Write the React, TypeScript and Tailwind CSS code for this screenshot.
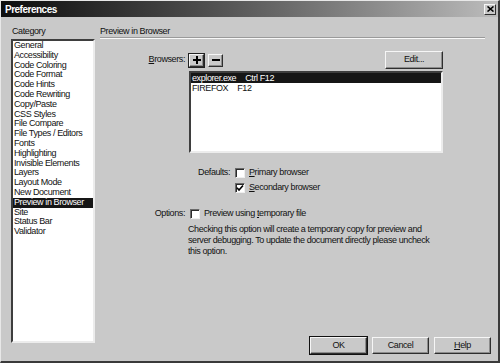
import clsx from "clsx";

const categories = [
  "General",
  "Accessibility",
  "Code Coloring",
  "Code Format",
  "Code Hints",
  "Code Rewriting",
  "Copy/Paste",
  "CSS Styles",
  "File Compare",
  "File Types / Editors",
  "Fonts",
  "Highlighting",
  "Invisible Elements",
  "Layers",
  "Layout Mode",
  "New Document",
  "Preview in Browser",
  "Site",
  "Status Bar",
  "Validator",
];

const browsers = [
  { name: "explorer.exe", key: "Ctrl F12", selected: true },
  { name: "FIREFOX", key: "F12", selected: false },
];

// raised win-classic button
function Btn({ children, className, isDefault }: { children: React.ReactNode; className?: string; isDefault?: boolean }) {
  return (
    <button
      className={clsx(
        "flex items-center justify-center bg-[#c9c9c9] border border-t-[#f6f6f6] border-l-[#f6f6f6] border-r-[#2e2e2e] border-b-[#2e2e2e] shadow-[inset_-1px_-1px_0_#8c8c8c]",
        isDefault && "outline outline-1 outline-[#111]",
        className
      )}
    >
      {children}
    </button>
  );
}

function Checkbox({ checked, className }: { checked?: boolean; className?: string }) {
  return (
    <div
      className={clsx(
        "flex items-center justify-center bg-white border border-t-[#6a6a6a] border-l-[#6a6a6a] border-r-[#efefef] border-b-[#efefef] shadow-[inset_1px_1px_0_#2a2a2a]",
        className
      )}
    >
      {checked && (
        <svg width="8" height="8" viewBox="0 0 8 8">
          <path d="M1 3.8 L3 6 L7 1.5" fill="none" stroke="#000" strokeWidth="1.6" />
        </svg>
      )}
    </div>
  );
}

// underlined access key letter
function Key({ children }: { children: React.ReactNode }) {
  return <span className="underline underline-offset-[1px]">{children}</span>;
}

export default function App() {
  return (
    <div className="w-[500px] h-[363px] flex flex-col bg-[#c9c9c9] border-t border-l border-t-[#e8e8e8] border-l-[#e8e8e8] border-r-2 border-b-2 border-r-[#3a3a3a] border-b-[#3a3a3a] text-[9px] tracking-[-0.4px] text-[#111] font-['Liberation_Sans',Arial,sans-serif] overflow-hidden">
      {/* Title bar */}
      <div className="h-[16px] flex items-center justify-between pl-[4px] pr-[2px] bg-linear-to-r from-[#0e0e0e] to-[#bcbcbc]">
        <span className="text-white font-bold text-[10px] tracking-[-0.5px]">Preferences</span>
        <div className="w-[12px] h-[11px] flex items-center justify-center bg-[#c9c9c9] border border-t-[#f6f6f6] border-l-[#f6f6f6] border-r-[#2e2e2e] border-b-[#2e2e2e]">
          <svg width="7" height="6" viewBox="0 0 7 6">
            <path d="M0.5 0.5 L6.5 5.5 M6.5 0.5 L0.5 5.5" stroke="#000" strokeWidth="1.6" />
          </svg>
        </div>
      </div>

      {/* Body */}
      <div className="flex-1 flex pl-[10px] pr-[7px] pb-[7px] gap-[5px]">
        {/* Category column */}
        <div className="w-[84px] flex flex-col">
          <div className="mt-[8px] h-[12px] leading-[12px] pl-[1px]">Category</div>
          <div className="mt-[2px] h-[304px] bg-white border-2 border-t-[#3e3e3e] border-l-[#3e3e3e] border-r-[#ececec] border-b-[#ececec]">
            {categories.map((c) => (
              <div
                key={c}
                className={clsx(
                  "h-[9.8px] leading-[9.8px] pl-[1px] whitespace-nowrap",
                  c === "Preview in Browser" && "bg-[#161616] text-white"
                )}
              >
                {c}
              </div>
            ))}
          </div>
        </div>

        {/* Settings panel */}
        <div className="flex-1 flex flex-col">
          <div className="mt-[8px] h-[12px] leading-[12px]">Preview in Browser</div>
          <div className="w-[385px] h-[2px] border-t border-b border-t-[#9a9a9a] border-b-[#f8f8f8]" />

          {/* Browsers row */}
          <div className="mt-[12px] w-[343px] h-[18px] flex items-center">
            <div className="w-[85px] text-right">
              <Key>B</Key>rowsers:
            </div>
            <Btn className="ml-[4px] w-[15px] h-[13px] outline outline-1 outline-[#222]">
              <svg width="8" height="8" viewBox="0 0 8 8">
                <path d="M3 0 H5 V3 H8 V5 H5 V8 H3 V5 H0 V3 H3 Z" fill="#000" />
              </svg>
            </Btn>
            <Btn className="ml-[4px] w-[15px] h-[13px]">
              <svg width="8" height="8" viewBox="0 0 8 8">
                <rect x="0" y="3" width="8" height="2" fill="#000" />
              </svg>
            </Btn>
            <Btn className="ml-auto w-[58px] h-[18px]">Edit...</Btn>
          </div>

          {/* Browser list */}
          <div className="mt-[2px] ml-[89px] w-[254px] h-[82px] bg-white border-2 border-t-[#3e3e3e] border-l-[#3e3e3e] border-r-[#ececec] border-b-[#ececec]">
            {browsers.map((b) => (
              <div
                key={b.name}
                className={clsx(
                  "h-[10px] leading-[10px] pl-[1px] whitespace-nowrap",
                  b.selected && "bg-[#161616] text-white"
                )}
              >
                <span>{b.name}</span>
                <span className="ml-[9px]">{b.key}</span>
              </div>
            ))}
          </div>

          {/* Defaults */}
          <div className="mt-[15px] h-[10px] flex items-center">
            <div className="w-[130px] text-right">Defaults:</div>
            <Checkbox className="ml-[5px] w-[10px] h-[10px]" />
            <span className="ml-[4px]">
              <Key>P</Key>rimary browser
            </span>
          </div>
          <div className="mt-[5px] h-[10px] flex items-center pl-[135px]">
            <Checkbox checked className="w-[10px] h-[10px]" />
            <span className="ml-[4px]">
              <Key>S</Key>econdary browser
            </span>
          </div>

          {/* Options */}
          <div className="mt-[16px] h-[10px] flex items-center">
            <div className="w-[85px] text-right">Options:</div>
            <Checkbox className="ml-[5px] w-[10px] h-[10px]" />
            <span className="ml-[4px]">
              Preview using <Key>t</Key>emporary file
            </span>
          </div>
          <div className="mt-[5px] pl-[88px] leading-[11px] whitespace-nowrap">
            Checking this option will create a temporary copy for preview and
            <br />
            server debugging. To update the document directly please uncheck
            <br />
            this option.
          </div>

          {/* Dialog buttons */}
          <div className="mt-auto flex justify-end gap-[5px]">
            <Btn isDefault className="w-[57px] h-[17px]">OK</Btn>
            <Btn className="w-[57px] h-[17px]">Cancel</Btn>
            <Btn className="w-[57px] h-[17px]">
              <span>
                <Key>H</Key>elp
              </span>
            </Btn>
          </div>
        </div>
      </div>
    </div>
  );
}
